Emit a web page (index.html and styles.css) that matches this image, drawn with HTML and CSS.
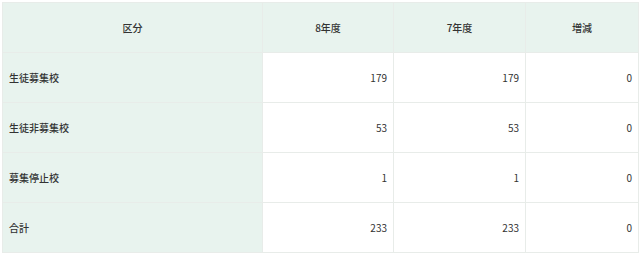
FILE: index.html
```html
<!DOCTYPE html>
<html lang="ja">
<head>
<meta charset="utf-8">
<link rel="stylesheet" href="styles.css">
</head>
<body>
<table class="stats">
  <colgroup>
    <col class="c-label">
    <col class="c-num">
    <col class="c-num2">
    <col class="c-diff">
  </colgroup>
  <thead>
    <tr>
      <th>区分</th>
      <th>8年度</th>
      <th>7年度</th>
      <th>増減</th>
    </tr>
  </thead>
  <tbody>
    <tr><th>生徒募集校</th><td>179</td><td>179</td><td>0</td></tr>
    <tr><th>生徒非募集校</th><td>53</td><td>53</td><td>0</td></tr>
    <tr><th>募集停止校</th><td>1</td><td>1</td><td>0</td></tr>
    <tr><th>合計</th><td>233</td><td>233</td><td>0</td></tr>
  </tbody>
</table>
</body>
</html>
```
FILE: styles.css
```css
html, body {
  margin: 0;
  padding: 0;
  background: #ffffff;
}
body {
  padding: 2px 3px 0 2px;
  font-family: "Noto Sans CJK JP", "Noto Sans", sans-serif;
  font-size: 10px;
  color: #333333;
}
.stats {
  width: 636px;
  border-collapse: collapse;
  table-layout: fixed;
}
.c-label { width: 260px; }
.c-num { width: 131px; }
.c-num2 { width: 132px; }
.c-diff { width: 113px; }
.stats th,
.stats td {
  height: 49px;
  border: 1px solid #e8ece9;
  padding: 0 6px;
  font-weight: normal;
}
.stats thead th {
  background: #e8f3ee;
  text-align: center;
  font-weight: 500;
}
.stats tbody th {
  background: #e8f3ee;
  text-align: left;
  font-weight: 500;
}
.stats tbody td {
  text-align: right;
  background: #ffffff;
}
```
